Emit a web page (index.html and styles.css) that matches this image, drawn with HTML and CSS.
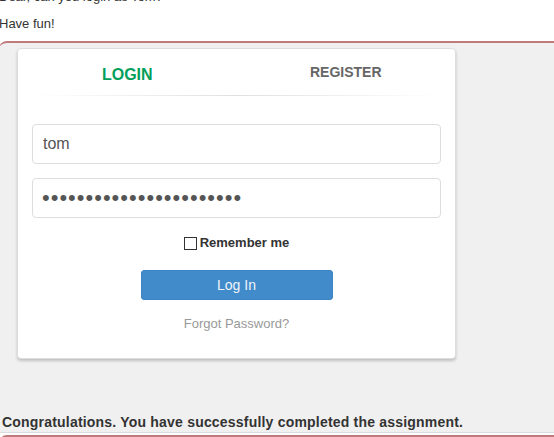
FILE: index.html
```html
<!DOCTYPE html>
<html lang="en">
<head>
  <meta charset="UTF-8">
  <title>Login</title>
  <link rel="stylesheet" href="styles.css">
</head>
<body>
  <div class="page">
    <p class="intro">Dear, can you login as Tom?</p>
    <p class="intro">Have fun!</p>

    <div class="attack-container">
      <div class="panel-login">
        <div class="panel-heading">
          <div class="tab"><a class="active" href="#">LOGIN</a></div>
          <div class="tab"><a href="#">REGISTER</a></div>
        </div>
        <hr class="heading-line">
        <form class="panel-body">
          <input class="form-control" type="text" value="tom">
          <input class="form-control password" type="password" value="passwordpassword1234567">
          <label class="remember"><input type="checkbox"> Remember me</label>
          <button class="btn-login" type="button">Log In</button>
          <a class="forgot" href="#">Forgot Password?</a>
        </form>
      </div>

      <div class="feedback">Congratulations. You have successfully completed the assignment.</div>
    </div>

    <div class="attack-container next"></div>
  </div>
</body>
</html>
```

FILE: styles.css
```css
body {
  margin: 0;
  background-color: #fff;
  font-family: "Liberation Sans", Arial, sans-serif;
  font-size: 13px;
  line-height: 1.42857;
  color: #333;
  overflow: hidden;
}

.page {
  margin-top: -12px;
  margin-left: -1px;
}

.intro {
  margin: 0 0 8px;
}

.attack-container {
  margin-top: 5px;
  border-top: 2px solid #c07a7c;
  border-radius: 8px 0 0 0;
  background-color: #f0f0f0;
  padding: 5px 0 0 18px;
  border-bottom: 1px solid #dcdcdc;
}

.attack-container.next {
  margin-top: 2px;
  height: 20px;
  padding: 0;
  border-bottom: 0;
}

/* login panel */
.panel-login {
  width: 437px;
  background-color: #fff;
  border: 1px solid #ddd;
  border-radius: 4px;
  box-shadow: 0 2px 3px rgba(0, 0, 0, 0.2);
}

.panel-heading {
  display: flex;
  align-items: baseline;
  padding: 12px 0 0;
  height: 29px;
}

.tab {
  width: 50%;
  text-align: center;
}

.tab a {
  font-size: 14px;
  font-weight: bold;
  color: #666;
  text-decoration: none;
}

.tab a.active {
  position: relative;
  top: 3px;
  font-size: 16px;
  color: #029f5b;
}

.heading-line {
  margin: 5px 15px 0;
  border: 0;
  height: 1px;
  background-image: linear-gradient(to right, rgba(0, 0, 0, 0), rgba(0, 0, 0, 0.12), rgba(0, 0, 0, 0));
}

.panel-body {
  display: flex;
  flex-direction: column;
  align-items: center;
  padding: 28px 14px 25px;
  margin: 0;
}

.form-control {
  box-sizing: border-box;
  width: 100%;
  height: 40px;
  margin-bottom: 14px;
  padding: 6px 10px;
  border: 1px solid #ddd;
  border-radius: 4px;
  font-family: "Liberation Sans", Arial, sans-serif;
  font-size: 16px;
  color: #555;
  background-color: #fff;
}

.form-control.password {
  font-size: 22px;
  letter-spacing: 1px;
  padding-left: 9px;
}

.remember {
  margin-top: 2px;
  display: flex;
  align-items: center;
  font-weight: bold;
  font-size: 13px;
  color: #333;
}

.remember input {
  appearance: none;
  margin: 0 3px 0 0;
  width: 13px;
  height: 13px;
  border: 1px solid #333;
  background-color: #fff;
}

.btn-login {
  margin-top: 17px;
  width: 192px;
  height: 30px;
  border: 1px solid #3a83c4;
  border-radius: 3px;
  background-color: #428bca;
  color: #eef4fa;
  font-family: "Liberation Sans", Arial, sans-serif;
  font-size: 14px;
}

.forgot {
  margin-top: 15px;
  font-size: 13px;
  color: #999;
  text-decoration: none;
}

.feedback {
  margin: 54px 0 0 -15px;
  font-weight: bold;
  font-size: 14px;
  letter-spacing: 0.2px;
  color: #333;
  line-height: 18px;
  padding-bottom: 1px;
}
```
